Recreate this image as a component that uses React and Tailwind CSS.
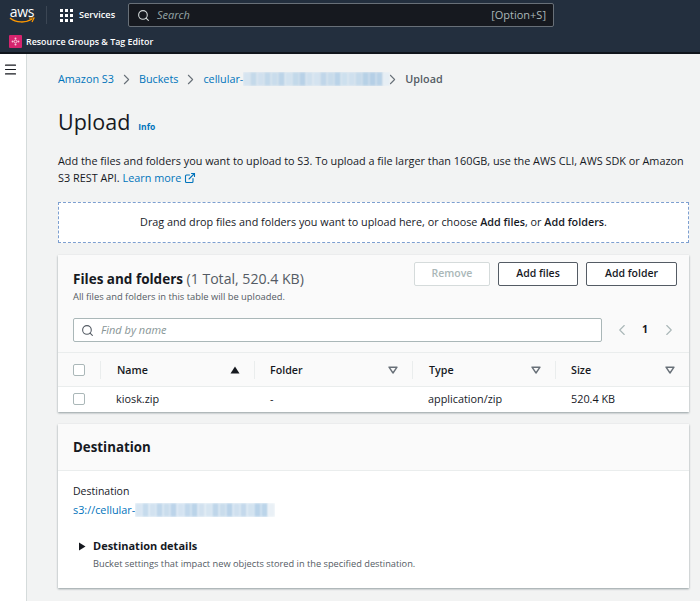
import React from "react";
import { Search, ChevronRight, ChevronLeft, ExternalLink, Menu } from "lucide-react";

const font = { fontFamily: '"Open Sans", "Noto Sans", sans-serif' };

// Redacted bucket name, drawn as a row of pale blue blocks
function Blur({ cells, h = "h-[14px]" }) {
  return (
    <span className={`inline-flex ${h} overflow-hidden`}>
      {cells.map((c, i) => (
        <span key={i} className="w-[7px] h-full blur-[1px]" style={{ background: c }} />
      ))}
    </span>
  );
}

const crumbCells = ["#d6e4f0", "#c4d9ea", "#d0e0ee", "#c2d8ea", "#c9dcec", "#bcd4e8", "#d2e2ef", "#c3d9ea", "#b8d1e7", "#cfe0ee", "#d4e3f0", "#c0d6e9", "#c8dbeb", "#bad3e8", "#cde0ee", "#cfe0ee", "#c5daeb", "#b7d1e6", "#b5cfe6", "#b9d2e7", "#e6eef4"];
const destCells = ["#d8e6f2", "#c6dbed", "#d2e2f0", "#c0d7eb", "#cadded", "#bcd4ea", "#d4e3f1", "#c2d8ec", "#bbd4e9", "#d1e1ef", "#d6e5f1", "#bfd6ea", "#c9dcec", "#bad3e9", "#cfe0ef", "#c4d9ec", "#d3e3f0", "#b9d3e9", "#bcd5ea", "#e9f0f6"];

function Sort({ active }) {
  return (
    <svg width="10" height="8" viewBox="0 0 10 8" className="shrink-0">
      {active ? (
        <path d="M5 0.5 L9.5 7.5 H0.5 Z" fill="#16191f" />
      ) : (
        <path d="M1 1.2 H9 L5 7 Z" fill="none" stroke="#687078" strokeWidth="1.4" strokeLinejoin="round" />
      )}
    </svg>
  );
}

function Check() {
  return <span className="block w-[12px] h-[12px] rounded-[2px] border border-[#aab7b8] bg-white shrink-0" />;
}

function Col({ name, width, active, pad = "pl-[15px]" }) {
  return (
    <div className={`flex items-center justify-between h-[18px] border-l border-[#eaeded] ${pad} pr-[14px] ${width}`}>
      <span className="pt-[1px] text-[10.7px] font-semibold text-[#16191f]">{name}</span>
      <Sort active={active} />
    </div>
  );
}

export default function App() {
  return (
    <div className="h-[601px] w-[700px] overflow-hidden flex flex-col bg-[#f2f3f3] text-[#16191f]" style={font}>
      {/* Header */}
      <header className="h-[54px] shrink-0 bg-[#232f3e] border-b-2 border-[#10151c] flex flex-col">
        <div className="h-[30px] flex items-center pl-[9px]">
          <div className="w-[26px] flex flex-col items-center">
            <span className="text-[14px] leading-[11px] font-medium text-white tracking-[-0.3px]">aws</span>
            <svg width="26" height="7" viewBox="0 0 26 7">
              <path d="M1 1 C7 6 17 6 23 2" fill="none" stroke="#ff9900" strokeWidth="1.5" />
              <path d="M20 1 L25 1 L23 5" fill="none" stroke="#ff9900" strokeWidth="1.2" />
            </svg>
          </div>
          <div className="w-px h-[18px] bg-[#3b4654] ml-[11px]" />
          <div className="grid grid-cols-3 gap-[2px] ml-[13px]">
            {Array.from({ length: 9 }).map((_, i) => (
              <span key={i} className="w-[3px] h-[3px] bg-white" />
            ))}
          </div>
          <span className="ml-[6px] w-[36px] text-[9.2px] font-semibold text-white whitespace-nowrap">Services</span>
          <div className="ml-[13px] w-[426px] h-[24px] rounded-[2px] bg-[#16191f] border border-[#687078] flex items-center pl-[8px] pr-[7px]">
            <Search size={13} className="text-[#d5dbdb]" strokeWidth={2} />
            <span className="ml-[7px] text-[11px] italic text-[#95a5a6]">Search</span>
            <span className="ml-auto text-[11px] text-[#aab7b8]">[Option+S]</span>
          </div>
        </div>
        <div className="flex-1 flex items-center pl-[9px] pt-[1px]">
          <span className="w-[13px] h-[13px] rounded-[1px] bg-[#d6246e] flex items-center justify-center">
            <svg width="9" height="9" viewBox="0 0 9 9">
              <circle cx="4.5" cy="4.5" r="1.4" fill="none" stroke="#f7c6d9" strokeWidth="1" />
              <circle cx="4.5" cy="1.6" r="1" fill="#f7c6d9" />
              <circle cx="4.5" cy="7.4" r="1" fill="#f7c6d9" />
              <circle cx="1.6" cy="4.5" r="1" fill="#f7c6d9" />
              <circle cx="7.4" cy="4.5" r="1" fill="#f7c6d9" />
            </svg>
          </span>
          <span className="ml-[4px] text-[8.9px] font-semibold text-white whitespace-nowrap">Resource Groups &amp; Tag Editor</span>
        </div>
      </header>

      <div className="flex-1 flex min-h-0">
        {/* Sidebar */}
        <aside className="w-[27px] shrink-0 bg-white border-r border-[#d5dbdb] pt-[8px] pl-[3px]">
          <Menu size={15} className="text-[#16191f]" strokeWidth={1.8} />
        </aside>

        {/* Main */}
        <main className="flex-1 min-w-0 pl-[31px] pr-[11px]">
          <nav className="h-[20px] mt-[15px] flex items-center text-[10.8px] text-[#0073bb] whitespace-nowrap">
            <span>Amazon S3</span>
            <ChevronRight size={17} strokeWidth={1.5} className="mx-[4px] text-[#687078]" />
            <span>Buckets</span>
            <ChevronRight size={17} strokeWidth={1.5} className="mx-[4px] text-[#687078]" />
            <span>cellular-</span>
            <Blur cells={crumbCells} />
            <ChevronRight size={17} strokeWidth={1.5} className="-ml-[6px] mr-[4px] text-[#687078]" />
            <span className="font-semibold text-[#545b64]">Upload</span>
          </nav>

          <div className="mt-[15px] flex items-baseline h-[36px]">
            <h1 className="text-[21.5px] leading-[36px] font-normal text-[#16191f]">Upload</h1>
            <span className="ml-[8px] text-[8.5px] font-bold text-[#0073bb]">Info</span>
          </div>

          <p className="mt-[12px] text-[10.85px] leading-[17px] text-[#16191f] whitespace-nowrap">
            Add the files and folders you want to upload to S3. To upload a file larger than 160GB, use the AWS CLI, AWS SDK or Amazon
            <br />
            S3 REST API. <span className="text-[#0073bb]">Learn more</span>{" "}
            <ExternalLink size={12} className="inline text-[#0073bb] align-[-2px]" strokeWidth={2.2} />
          </p>

          <div className="mt-[16px] h-[41px] bg-white border border-dashed border-[#7d9fd0] flex items-center justify-center text-[10.8px] whitespace-nowrap">
            <span>
              Drag and drop files and folders you want to upload here, or choose <b className="font-semibold">Add files</b>, or <b className="font-semibold">Add folders</b>.
            </span>
          </div>

          {/* Files and folders */}
          <section className="mt-[12px] h-[157px] shadow-[0_1px_2px_rgba(0,28,36,0.4)]">
            <div className="h-[98px] bg-[#fafafa] border-b border-[#eaeded] px-[15px]">
              <div className="flex justify-between">
                <div className="pt-[14px]">
                  <h2 className="text-[13.5px] leading-[20px] font-bold whitespace-nowrap">
                    Files and folders <span className="text-[14.1px] font-normal text-[#545b64]">(1 Total, 520.4 KB)</span>
                  </h2>
                  <p className="mt-[1px] text-[9.35px] leading-[14px] text-[#545b64] whitespace-nowrap">All files and folders in this table will be uploaded.</p>
                </div>
                <div className="flex gap-[8px] pt-[7px] -mr-[3px]">
                  <button className="w-[76px] h-[24px] rounded-[2px] border border-[#d5dbdb] bg-white text-[10.5px] font-semibold text-[#aab7b8]">Remove</button>
                  <button className="w-[80px] h-[24px] rounded-[2px] border border-[#545b64] bg-white text-[10.5px] font-semibold text-[#16191f]">Add files</button>
                  <button className="w-[91px] h-[24px] rounded-[2px] border border-[#545b64] bg-white text-[10.5px] font-semibold text-[#16191f]">Add folder</button>
                </div>
              </div>
              <div className="mt-[14px] flex items-center">
                <div className="w-[529px] shrink-0 h-[24px] bg-white border border-[#aab7b8] rounded-[2px] flex items-center pl-[7px]">
                  <Search size={13} className="text-[#545b64]" />
                  <span className="ml-[7px] text-[11px] italic text-[#879596]">Find by name</span>
                </div>
                <ChevronLeft size={18} strokeWidth={1.5} className="shrink-0 ml-[11px] text-[#aab7b8]" />
                <span className="ml-[11px] text-[10.5px] font-bold">1</span>
                <ChevronRight size={18} strokeWidth={1.5} className="shrink-0 ml-[12px] text-[#aab7b8]" />
              </div>
            </div>
            <div className="h-[34px] bg-[#fafafa] border-b border-[#eaeded] flex items-center pl-[15px]">
              <Check />
              <div className="w-[15px]" />
              <Col name="Name" width="w-[154px]" active pad="pl-[16px]" />
              <Col name="Folder" width="w-[158px]" />
              <Col name="Type" width="w-[143px]" pad="pl-[16px]" />
              <Col name="Size" width="w-[134px]" />
            </div>
            <div className="h-[25px] pb-[1px] bg-white flex items-center pl-[15px] text-[10.85px] whitespace-nowrap">
              <Check />
              <span className="w-[185px] pl-[31px]">kiosk.zip</span>
              <span className="w-[158px]">-</span>
              <span className="w-[143px]">application/zip</span>
              <span>520.4 KB</span>
            </div>
          </section>

          {/* Destination */}
          <section className="mt-[12px] h-[164px] bg-white shadow-[0_1px_2px_rgba(0,28,36,0.4)]">
            <div className="h-[47px] pt-[1px] bg-[#fafafa] border-b border-[#eaeded] px-[15px] flex items-center">
              <h2 className="text-[13.3px] font-bold">Destination</h2>
            </div>
            <div className="px-[15px] pt-[12px]">
              <p className="text-[10.5px] leading-[16px]">Destination</p>
              <p className="mt-[3px] h-[16px] flex items-center text-[10.85px] text-[#0073bb] whitespace-nowrap">
                <span>s3://cellular-</span>
                <Blur cells={destCells} />
              </p>
              <div className="mt-[20px] flex items-center pl-[5px]">
                <svg width="8" height="9" viewBox="0 0 8 9">
                  <path d="M1 0.5 L7.5 4.5 L1 8.5 Z" fill="#16191f" />
                </svg>
                <span className="ml-[7px] text-[11px] font-bold whitespace-nowrap">Destination details</span>
              </div>
              <p className="pl-[20px] mt-[2px] text-[9.25px] leading-[14px] text-[#545b64] whitespace-nowrap">Bucket settings that impact new objects stored in the specified destination.</p>
            </div>
          </section>
        </main>
      </div>
    </div>
  );
}
